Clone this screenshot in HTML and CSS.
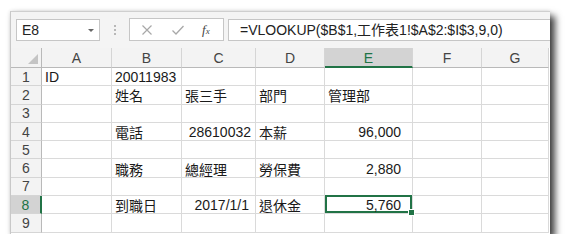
FILE: index.html
```html
<!DOCTYPE html>
<html lang="zh-Hant">
<head>
    <meta charset="UTF-8">
    <title>VLOOKUP</title>
    <link rel="stylesheet" href="styles.css">
</head>
<body>
<div class="window">
    <div class="toolbar">
        <div class="namebox">
            <span>E8</span>
            <span class="arrow"></span>
        </div>
        <div class="dots"><i></i><i></i><i></i></div>
        <div class="fxbox">
            <svg class="btn" width="14" height="14" viewBox="0 0 14 14"><path d="M2.5 2.5 L11.5 11.5 M11.5 2.5 L2.5 11.5" stroke="#a8a8a8" stroke-width="1.2" fill="none"/></svg>
            <svg class="btn" width="14" height="14" viewBox="0 0 14 14"><path d="M1.5 7.5 L5 11 L12.5 3" stroke="#a8a8a8" stroke-width="1.3" fill="none"/></svg>
            <span class="fx">f<sub>x</sub></span>
        </div>
        <div class="formula">=VLOOKUP($B$1,工作表1!$A$2:$I$3,9,0)</div>
    </div>
    <div class="sheet">
        <div class="hd corner"><span class="tri"></span></div>
        <div class="hd">A</div><div class="hd">B</div><div class="hd">C</div><div class="hd">D</div>
        <div class="hd active">E</div><div class="hd">F</div><div class="hd">G</div>

        <div class="rh">1</div><div class="c">ID</div><div class="c">20011983</div><div class="c"></div><div class="c"></div><div class="c"></div><div class="c"></div><div class="c"></div>
        <div class="rh">2</div><div class="c"></div><div class="c">姓名</div><div class="c">張三手</div><div class="c">部門</div><div class="c">管理部</div><div class="c"></div><div class="c"></div>
        <div class="rh">3</div><div class="c"></div><div class="c"></div><div class="c"></div><div class="c"></div><div class="c"></div><div class="c"></div><div class="c"></div>
        <div class="rh">4</div><div class="c"></div><div class="c">電話</div><div class="c num">28610032</div><div class="c">本薪</div><div class="c num money">96,000</div><div class="c"></div><div class="c"></div>
        <div class="rh">5</div><div class="c"></div><div class="c"></div><div class="c"></div><div class="c"></div><div class="c"></div><div class="c"></div><div class="c"></div>
        <div class="rh">6</div><div class="c"></div><div class="c">職務</div><div class="c">總經理</div><div class="c">勞保費</div><div class="c num money">2,880</div><div class="c"></div><div class="c"></div>
        <div class="rh">7</div><div class="c"></div><div class="c"></div><div class="c"></div><div class="c"></div><div class="c"></div><div class="c"></div><div class="c"></div>
        <div class="rh active">8</div><div class="c"></div><div class="c">到職日</div><div class="c num date">2017/1/1</div><div class="c">退休金</div><div class="c num money selected">5,760</div><div class="c"></div><div class="c"></div>
        <div class="rh">9</div><div class="c"></div><div class="c"></div><div class="c"></div><div class="c"></div><div class="c"></div><div class="c"></div><div class="c"></div>
    </div>
</div>
</body>
</html>
```

FILE: styles.css
```css
body {
    margin: 0;
    background: #fff;
    font-family: "Liberation Sans", "Noto Sans CJK TC", sans-serif;
    font-size: 14px;
    color: #1a1a1a;
}
.window {
    margin: 11px 0 0 10px;
    width: 540px;
    height: 223px;
    background: #fff;
    border-left: 1px solid #c8c8c8;
    border-top: 1px solid #cfcfcf;
    box-sizing: border-box;
    overflow: hidden;
    box-shadow: 5px 5px 7px rgba(0, 0, 0, 0.75), 0 0 4px rgba(0, 0, 0, 0.12);
}
.toolbar {
    height: 36px;
    background: #f4f4f4;
    display: flex;
    align-items: flex-start;
    padding: 7px 0 0 5px;
    box-sizing: border-box;
}
.namebox {
    width: 84px;
    height: 22px;
    background: #fff;
    border: 1px solid #c6c6c6;
    box-sizing: border-box;
    display: flex;
    align-items: center;
    justify-content: space-between;
    padding: 0 5px 0 5px;
    color: #222;
}
.arrow {
    width: 0;
    height: 0;
    border-left: 3px solid transparent;
    border-right: 3px solid transparent;
    border-top: 3px solid #666;
}
.dots {
    width: 29px;
    height: 22px;
    display: flex;
    flex-direction: column;
    align-items: center;
    justify-content: center;
    gap: 2px;
}
.dots i {
    width: 2px;
    height: 2px;
    background: #b8b8b8;
}
.fxbox {
    width: 95px;
    height: 23px;
    margin-top: -1px;
    background: #fff;
    border: 1px solid #c6c6c6;
    box-sizing: border-box;
    display: flex;
    align-items: center;
    padding: 0 0 0 10px;
    gap: 17px;
}
.fx {
    font-family: "Liberation Serif", serif;
    font-style: italic;
    font-size: 13px;
    color: #444;
}
.fx sub {
    font-size: 9px;
    vertical-align: 0;
}
.formula {
    flex: 1;
    height: 22px;
    margin-left: 4px;
    background: #fff;
    border: 1px solid #c6c6c6;
    border-right: none;
    box-sizing: border-box;
    padding: 0 0 0 11px;
    line-height: 20px;
    white-space: nowrap;
    color: #222;
}
.sheet {
    display: grid;
    grid-template-columns: 31px 70px 70px 74px 69px 88px 69px 67px;
    grid-template-rows: 20px repeat(9, 18.3px);
}
.hd, .rh {
    background: #f3f3f3;
    color: #444;
    display: flex;
    align-items: center;
    justify-content: center;
    box-sizing: border-box;
}
.hd {
    border-right: 1px solid #d5d5d5;
    border-bottom: 1px solid #b9b9b9;
    padding-top: 1px;
}
.rh {
    border-right: 1px solid #b9b9b9;
    border-bottom: 1px solid #d5d5d5;
}
.corner {
    position: relative;
    border-right: 1px solid #b9b9b9;
}
.tri {
    position: absolute;
    right: 3px;
    bottom: 3px;
    width: 0;
    height: 0;
    border-left: 10px solid transparent;
    border-bottom: 10px solid #c4c4c4;
}
.hd.active {
    background: #d3d3d3;
    color: #217346;
    border-bottom: 2px solid #217346;
}
.rh.active {
    background: #d3d3d3;
    color: #217346;
    border-right: 2px solid #217346;
}
.c {
    border-right: 1px solid #dadada;
    border-bottom: 1px solid #dadada;
    box-sizing: border-box;
    display: flex;
    align-items: center;
    padding: 1px 0 0 3px;
    white-space: nowrap;
    overflow: hidden;
}
.num {
    justify-content: flex-end;
    padding: 1px 4px 0 0;
}
.date {
    padding-right: 6px;
}
.money {
    padding-right: 11px;
}
.c.selected {
    position: relative;
    overflow: visible;
    box-shadow: inset 0 0 0 2px #217346;
    margin: -1px 0 0 0;
    height: calc(100% + 1px);
    padding-top: 2px;
}
.c.selected::after {
    content: "";
    position: absolute;
    right: -3px;
    bottom: -3px;
    width: 5px;
    height: 5px;
    background: #217346;
    border: 1px solid #fff;
}
```
